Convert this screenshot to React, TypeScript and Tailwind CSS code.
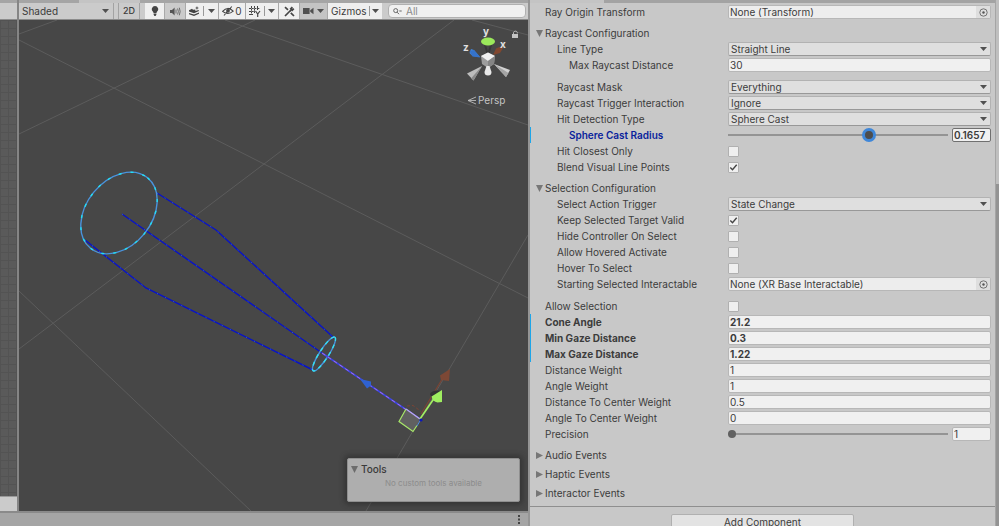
import React, { FunctionComponent, ReactNode } from 'react';

interface RowProps {
  label: string;
  indent?: 0 | 1 | 2;
  tone?: 'normal' | 'override' | 'active';
  children: ReactNode;
}

const indents = ['pl-[15px]', 'pl-[27px]', 'pl-[39px]'];
const tones = {
  normal: 'border-transparent',
  override: 'border-[#1ea5e8] font-bold',
  active: 'border-[#1ea5e8] font-semibold',
};

const toId = (label: string) => label.toLowerCase().replace(/ /g, '-');

const Row: FunctionComponent<RowProps> = ({ label, indent = 0, tone = 'normal', children }) => (
  <div className={`grid h-4 grid-cols-[197px_1fr] items-center border-l ${tones[tone]}`}>
    <label
      htmlFor={toId(label)}
      className={`-ml-px whitespace-nowrap ${indents[indent]} ${tone === 'active' ? 'text-[#0a1f9c]' : ''}`}
    >
      {label}
    </label>
    {children}
  </div>
);

const Caret: FunctionComponent<{ className?: string }> = ({ className = '' }) => (
  <svg viewBox="0 0 7 4" className={`h-1 w-[7px] shrink-0 ${className}`} fill="#505050">
    <path d="M0 0h7L3.5 4z" />
  </svg>
);

interface FieldProps {
  label: string;
  value: string;
  indent?: 0 | 1 | 2;
  tone?: 'normal' | 'override';
}

const TextRow: FunctionComponent<FieldProps> = ({ label, value, indent, tone }) => (
  <Row label={label} indent={indent} tone={tone}>
    <input
      id={toId(label)}
      defaultValue={value}
      className="h-3.5 w-full min-w-0 rounded-xs border border-[#b7b7b7] bg-[#f0f0f0] px-px outline-none"
    />
  </Row>
);

const SelectRow: FunctionComponent<FieldProps> = ({ label, value, indent }) => (
  <Row label={label} indent={indent}>
    <div className="grid items-center">
      <select
        id={toId(label)}
        className="col-start-1 row-start-1 h-3.5 w-full appearance-none rounded-xs border border-[#b2b2b2] border-b-[#989898] bg-[#dfdfdf] px-0.5 leading-3 outline-none"
      >
        <option>{value}</option>
      </select>
      <Caret className="pointer-events-none col-start-1 row-start-1 mr-1 justify-self-end" />
    </div>
  </Row>
);

const ObjectRow: FunctionComponent<FieldProps> = ({ label, value, indent }) => (
  <Row label={label} indent={indent}>
    <div className="flex h-3.5 overflow-hidden rounded-xs border border-[#b7b7b7] bg-[#ededed]">
      <input id={toId(label)} readOnly value={value} className="min-w-0 flex-1 px-px outline-none" />
      <button aria-label={`Pick ${label}`} className="flex w-3.5 items-center justify-center bg-[#dedede]">
        <svg viewBox="0 0 9 9" className="size-[9px]">
          <circle cx="4.5" cy="4.5" r="3.7" fill="none" stroke="#666" strokeWidth="0.9" />
          <circle cx="4.5" cy="4.5" r="1.2" fill="#555" />
        </svg>
      </button>
    </div>
  </Row>
);

const CheckRow: FunctionComponent<{ label: string; checked?: boolean; indent?: 0 | 1 | 2 }> = ({
  label,
  checked = false,
  indent = 1,
}) => (
  <Row label={label} indent={indent}>
    <div className="grid w-[11px] items-center">
      <input
        id={toId(label)}
        type="checkbox"
        defaultChecked={checked}
        className="peer col-start-1 row-start-1 size-[11px] appearance-none rounded-[1px] border border-[#b0b0b0] bg-[#efefef]"
      />
      <svg
        viewBox="0 0 11 11"
        className="pointer-events-none invisible col-start-1 row-start-1 size-[11px] peer-checked:visible"
        fill="none"
        stroke="#444"
        strokeWidth="1.4"
      >
        <path d="M2.3 5.6l2.2 2.2 4.2-5" />
      </svg>
    </div>
  </Row>
);

const Foldout: FunctionComponent<{ title: string; open?: boolean }> = ({ title, open = false }) => (
  <button className="flex h-4 w-full items-center gap-0.5 pl-1.5 text-left" aria-expanded={open}>
    <svg viewBox="0 0 7 7" className="size-[7px]" fill="#777">
      <path d={open ? 'M0 0h7L3.5 7z' : 'M0 0l7 3.5L0 7z'} />
    </svg>
    {title}
  </button>
);

const Inspector: FunctionComponent = () => (
  <aside className="flex w-[471px] shrink-0 border-l-2 border-[#959595] bg-[#c8c8c8]">
    <div className="flex min-w-0 flex-1 flex-col">
      <div className="h-[3px] shrink-0 bg-[#a3a3a3]">
        <div className="h-full w-[74px] bg-[#c4c4c4]" />
      </div>
      <div className="pt-px pr-1">
        <ObjectRow label="Ray Origin Transform" value="None (Transform)" />
        <div className="mt-[5px]">
          <Foldout title="Raycast Configuration" open />
          <SelectRow label="Line Type" value="Straight Line" indent={1} />
          <TextRow label="Max Raycast Distance" value="30" indent={2} />
        </div>
        <div className="mt-1.5">
          <SelectRow label="Raycast Mask" value="Everything" indent={1} />
          <SelectRow label="Raycast Trigger Interaction" value="Ignore" indent={1} />
          <SelectRow label="Hit Detection Type" value="Sphere Cast" indent={1} />
          <Row label="Sphere Cast Radius" indent={2} tone="active">
            <div className="flex items-center gap-1">
              <input
                id="sphere-cast-radius"
                type="range"
                min="0"
                max="1"
                step="0.01"
                defaultValue="0.65"
                className="h-4 min-w-0 flex-1 appearance-none bg-transparent outline-none [&::-webkit-slider-runnable-track]:h-0.5 [&::-webkit-slider-runnable-track]:bg-[#949494] [&::-webkit-slider-thumb]:-mt-1.5 [&::-webkit-slider-thumb]:size-3.5 [&::-webkit-slider-thumb]:appearance-none [&::-webkit-slider-thumb]:rounded-full [&::-webkit-slider-thumb]:border-3 [&::-webkit-slider-thumb]:border-[#3f87d9] [&::-webkit-slider-thumb]:bg-[#4d4d4d]"
              />
              <input
                aria-label="Sphere Cast Radius value"
                defaultValue="0.1657"
                className="h-3.5 w-[39px] rounded-xs border border-[#707070] bg-[#f0f0f0] px-px outline-none"
              />
            </div>
          </Row>
          <CheckRow label="Hit Closest Only" />
          <CheckRow label="Blend Visual Line Points" checked />
        </div>
        <div className="mt-[5px]">
          <Foldout title="Selection Configuration" open />
          <SelectRow label="Select Action Trigger" value="State Change" indent={1} />
          <CheckRow label="Keep Selected Target Valid" checked />
          <CheckRow label="Hide Controller On Select" />
          <CheckRow label="Allow Hovered Activate" />
          <CheckRow label="Hover To Select" />
          <ObjectRow label="Starting Selected Interactable" value="None (XR Base Interactable)" indent={1} />
        </div>
        <div className="mt-1.5">
          <CheckRow label="Allow Selection" indent={0} />
          <TextRow label="Cone Angle" value="21.2" tone="override" />
          <TextRow label="Min Gaze Distance" value="0.3" tone="override" />
          <TextRow label="Max Gaze Distance" value="1.22" tone="override" />
          <TextRow label="Distance Weight" value="1" />
          <TextRow label="Angle Weight" value="1" />
          <TextRow label="Distance To Center Weight" value="0.5" />
          <TextRow label="Angle To Center Weight" value="0" />
          <Row label="Precision">
            <div className="flex items-center gap-1">
              <input
                id="precision"
                type="range"
                min="0"
                max="1"
                step="0.01"
                defaultValue="0"
                className="h-4 min-w-0 flex-1 appearance-none bg-transparent outline-none [&::-webkit-slider-runnable-track]:h-0.5 [&::-webkit-slider-runnable-track]:bg-[#949494] [&::-webkit-slider-thumb]:-mt-[3px] [&::-webkit-slider-thumb]:size-2 [&::-webkit-slider-thumb]:appearance-none [&::-webkit-slider-thumb]:rounded-full [&::-webkit-slider-thumb]:bg-[#616161]"
              />
              <input
                aria-label="Precision value"
                defaultValue="1"
                className="h-3.5 w-[39px] rounded-xs border border-[#b7b7b7] bg-[#f0f0f0] px-px outline-none"
              />
            </div>
          </Row>
        </div>
        <div className="mt-[5px] flex flex-col gap-[3px]">
          <Foldout title="Audio Events" />
          <Foldout title="Haptic Events" />
          <Foldout title="Interactor Events" />
        </div>
      </div>
      <div className="mt-[5px] flex justify-center border-t border-[#8f8f8f] pt-[7px]">
        <button className="flex h-[18px] w-[183px] shrink-0 justify-center rounded-xs border border-[#b0b0b0] bg-[#e3e3e3] pt-0.5 leading-none">
          Add Component
        </button>
      </div>
    </div>
    <div className="flex w-1 flex-col border-l border-[#a5a5a5] bg-[#bfbfbf] pt-[184px]">
      <div className="flex-1 bg-[#939393]" />
    </div>
  </aside>
);

const Toolbar: FunctionComponent = () => (
  <div className="flex h-[17px] shrink-0 items-stretch border-b border-[#8b8b8b] bg-[#cbcbcb]">
    <button className="flex w-[95px] items-center justify-between border-r border-[#a3a3a3] pr-1 pl-[3px]">
      Shaded
      <Caret />
    </button>
    <button className="ml-1 w-[22px] border-x border-[#a3a3a3] text-[9px] font-medium">2D</button>
    <div className="ml-[5px] flex items-stretch gap-px bg-[#a9a9a9]">
      <button aria-label="Scene lighting" className="flex w-[19px] items-center justify-center bg-[#efefef]">
        <svg viewBox="0 0 8 10" className="h-2.5 w-2" fill="#444">
          <path d="M4 0a3.2 3.2 0 0 1 2 5.7L5.4 7H2.6L2 5.7A3.2 3.2 0 0 1 4 0zM2.6 7.6h2.8v1L4.6 10H3.4l-.8-1.4z" />
        </svg>
      </button>
      <button aria-label="Scene audio" className="flex w-5 items-center justify-center bg-[#cbcbcb]">
        <svg viewBox="0 0 11 9" className="h-[9px] w-[11px]" fill="#555">
          <path d="M0 3h2l2.6-2.5v8L2 6H0z" />
          <path d="M6 2.5v4M7.6 1.5q1.5 3 0 6M9.3.7q1.7 3.8 0 7.6" fill="none" stroke="#555" strokeWidth=".8" />
        </svg>
      </button>
      <button aria-label="Effects" className="flex w-8 items-center justify-between bg-[#efefef] px-[3px]">
        <svg viewBox="0 0 10 10" className="size-2.5" fill="#444">
          <path d="M0 4.2l3-1.4 1 1 2.2-.2.3 1.4L9.5 4 10 5 5 7.3 0 5.5zM0 7l5 1.6L10 6.4v1.3L5 10 0 8.2zM8 0l.5 1.4 1.5.5-1.5.6L8 4l-.6-1.5L6 1.9l1.4-.5z" />
        </svg>
        <span className="h-2.5 w-px bg-[#999]" />
        <Caret />
      </button>
      <button aria-label="Hidden objects" className="flex w-[26px] items-center justify-center gap-px bg-[#efefef]">
        <svg viewBox="0 0 12 10" className="h-2.5 w-3" fill="none" stroke="#444" strokeWidth="1.1">
          <path d="M.6 5.3Q5.8-.4 11.2 5.2 6 9.8.6 5.3zM2 9.5L9.8.5" />
          <circle cx="6" cy="4.8" r="1.3" fill="#444" />
        </svg>
        0
      </button>
      <button aria-label="Grid" className="flex w-8 items-center justify-between bg-[#efefef] px-[3px]">
        <svg viewBox="0 0 12 11" className="h-[11px] w-3" fill="none" stroke="#444">
          <path d="M2.5 0v9M5.5 0v7M8.5 0v4M0 2.5h11M0 5.5h6M0 8.5h4" strokeDasharray="2 .7" />
          <path d="M6.5 5l2.2 3L11 5M8.7 8v3" strokeWidth="1.2" />
        </svg>
        <span className="h-2.5 w-px bg-[#999]" />
        <Caret />
      </button>
      <button aria-label="Component tools" className="flex w-5 items-center justify-center bg-[#efefef]">
        <svg viewBox="0 0 11 11" className="size-[11px]" fill="none" stroke="#444" strokeWidth="1.7">
          <path d="M1 10l5-5M8.4 1.2L6.8 2.8 8.2 4.2 9.8 2.6M1 1.2l3 2.6M6.8 6.8L10 10" />
          <path d="M5.8 5.4l1.5-1.5" />
        </svg>
      </button>
      <button aria-label="Scene camera" className="flex w-[27px] items-center justify-between bg-[#c4c4c4] px-[3px]">
        <svg viewBox="0 0 11 8" className="h-2 w-[11px]" fill="#505050">
          <path d="M0 1h6.6v6H0zM7.2 3.2L10.5.8v6.4L7.2 4.8z" />
        </svg>
        <Caret />
      </button>
      <button className="flex w-[54px] items-center justify-between bg-[#efefef] px-[3px]">
        Gizmos
        <span className="h-2.5 w-px bg-[#999]" />
        <Caret />
      </button>
    </div>
    <label className="my-px mr-0.5 ml-1.5 flex min-w-0 flex-1 items-center gap-1 rounded-sm border border-[#b0b0b0] bg-[#f0f0f0] pl-1">
      <svg viewBox="0 0 9 7" className="h-[7px] w-[9px] shrink-0" fill="none" stroke="#666">
        <circle cx="2.7" cy="2.6" r="2" />
        <path d="M4.2 4.2L6 6.2M6.3 3h2.4" />
      </svg>
      <input
        aria-label="Search scene"
        placeholder="All"
        className="w-full min-w-0 outline-none placeholder:text-[#8a8a8a]"
      />
    </label>
  </div>
);

const Viewport: FunctionComponent = () => (
  <svg viewBox="19 20 509 491" preserveAspectRatio="xMinYMin slice" className="block size-full" fill="none">
    <g stroke="#5c5c5c" strokeWidth="1">
      <path d="M19 34L57 20M19 134L255 20M19 40L264 164 528 298M19 349L264 164 454 20" />
      <path d="M225 20L528 125M472 20L528 35M528 235L366 511M19 291L134 400 251 511" />
    </g>

    {/* cone gizmo */}
    <g stroke="#0813c8" strokeWidth="1.4">
      <path d="M157 193L216 230 334 338M85 240L146 288 313 370M122 214L322 353" />
      <path
        d="M157 193L216 230 334 338M85 240L146 288 313 370M122 214L322 353"
        stroke="#3f6fd0"
        strokeWidth=".8"
        strokeDasharray="1 8"
      />
    </g>
    <g strokeWidth="1.4" stroke="#4a93dc">
      <ellipse cx="119" cy="213" rx="45.3" ry="32.7" transform="rotate(-51 119 213)" />
      <ellipse
        cx="119"
        cy="213"
        rx="45.3"
        ry="32.7"
        transform="rotate(-51 119 213)"
        stroke="#22e0f5"
        strokeDasharray="3 9"
      />
      <ellipse cx="324" cy="354" rx="20" ry="4.6" transform="rotate(-57 324 354)" />
      <ellipse
        cx="324"
        cy="354"
        rx="20"
        ry="4.6"
        transform="rotate(-57 324 354)"
        stroke="#35e2f0"
        strokeDasharray="4 4"
      />
    </g>
    <path d="M322 353L420 419" stroke="#3b46e0" strokeWidth="1.6" />
    <path d="M322 353L420 419" stroke="#a66bf0" strokeWidth="1" strokeDasharray="4 3" />
    <path d="M360 379l11 2.5v4l-4 3z" fill="#2f62d2" />

    {/* move handle */}
    <path d="M406 409l14.5 10-7.5 12.5-14-10z" fill="#606060" />
    <path d="M406 409l-7 12.5 14 10 4-6" stroke="#a8e86a" strokeWidth="1.2" />
    <path d="M406 409l14 10" stroke="#b9a6f5" strokeWidth="1.4" />
    <path d="M417 426l3.5-6" stroke="#4f8fe0" />
    <path d="M407 406l6-.5 8 6" stroke="#7b4434" strokeDasharray="3 2" />
    <path d="M421 414l23-38" stroke="#7b4434" strokeWidth="1.2" />
    <path d="M450 369l-10 6.5 1 4.5 8 1z" fill="#7d4835" />
    <path d="M430 394q3-5 11-3l-9 7z" fill="#333" />
    <path d="M420 419l15-22" stroke="#a2ee62" strokeWidth="1.7" />
    <path d="M442 390l-10.5 6.5q1 5 6 6l4.5-.5z" fill="#9fee60" />
    <circle cx="421" cy="420" r="1.6" fill="#0a16c0" />

    {/* orientation gizmo */}
    <path d="M485 45l3 10M491 45l-3 10" stroke="#383838" strokeWidth="2" />
    <path d="M480 57l-6-7-3-1-1.5 4 3 3z" fill="#4387dc" />
    <path d="M474 50l-4.5 1 3 5.5 8 1z" fill="#3573cb" />
    <path d="M493 55l3-6.5q6-3 7-.5l-3 5z" fill="#81472f" />
    <ellipse cx="488" cy="41.5" rx="7" ry="4" fill="#9be95b" />
    <path d="M482 66l-15 7.5 6.5 7z" fill="#bdbdbd" />
    <path d="M482 66l-11 12.5 2.5 2z" fill="#8a8a8a" />
    <path d="M494 64l16 6-4 7z" fill="#d2d2d2" />
    <path d="M494 64l14.5 9-2.5 4z" fill="#a5a5a5" />
    <path d="M481 56l7-3.5 7 3.5-1 8-6 4-6-4z" fill="#9d9d9d" />
    <path d="M481 56l7-3.5 7 3.5-7 5z" fill="#f0f0f0" />
    <path d="M488 61l7-5-1 8-6 4z" fill="#858585" />
    <path d="M486.5 66h3l2 6a3.5 3.5 0 0 1-7 0z" fill="#e8e8e8" />
    <g fill="#e0e0e0" fontFamily="Inter, sans-serif" fontSize="10" fontWeight="700">
      <text x="483" y="35">y</text>
      <text x="463" y="51">z</text>
      <text x="500" y="48">x</text>
    </g>
    <text x="478" y="104" fill="#c4c4c4" fontFamily="Inter, sans-serif" fontSize="10">
      Persp
    </text>
    <path d="M476 97l-8 3.5 8 3.5M468 100.5h8" stroke="#bbb" strokeWidth=".9" />
    <path d="M512 34h6v4h-6z" fill="#c4c4c4" />
    <path d="M513.5 34.5v-2a2 2 0 0 1 3.8 0v1" stroke="#c4c4c4" strokeWidth=".9" />
  </svg>
);

const ToolsOverlay: FunctionComponent = () => (
  <section className="absolute right-2 bottom-[9px] h-11 w-[173px] rounded-xs border border-[#8f8f8f] bg-[#aeaeae] px-[3px] pt-0.5 shadow-[0_0_5px_3px_rgba(35,35,35,0.45)]">
    <h2 className="flex h-4 items-center gap-[3px] font-medium text-[#3a3a3a]">
      <svg viewBox="0 0 7 7" className="size-[7px]" fill="#6c6c6c">
        <path d="M0 0h7L3.5 7z" />
      </svg>
      Tools
    </h2>
    <p className="text-center text-[8px] leading-3 text-[#8c8c8c]">No custom tools available</p>
  </section>
);

const App: FunctionComponent = () => (
  <div className="flex h-screen overflow-hidden bg-[#a5a5a5] font-['Inter',sans-serif] text-[10px] leading-4 text-[#3c3c3c]">
    <main className="flex min-w-0 flex-1 flex-col">
      <div className="flex min-h-0 flex-1">
        <div className="flex w-[17px] shrink-0 flex-col pt-[3px]">
          <div className="h-[17px] border-b border-[#8b8b8b] bg-[#cbcbcb]" />
          <div className="flex-1 bg-[#5a5a5a] bg-[linear-gradient(#535353_1px,transparent_1px),linear-gradient(90deg,#535353_1px,transparent_1px)] bg-size-[8px_8px]" />
          <div className="h-[15px] border-t border-[#999] bg-[#cbcbcb]" />
        </div>
        <div className="flex min-w-0 flex-1 flex-col border-l-2 border-[#858585]">
          <div className="h-[3px] shrink-0 bg-[#a5a5a5]">
            <div className="ml-[60px] h-full w-[61px] bg-[#c4c4c4]" />
          </div>
          <Toolbar />
          <div className="relative min-h-0 flex-1 bg-[#474747]">
            <Viewport />
            <ToolsOverlay />
          </div>
        </div>
      </div>
      <div className="flex h-[15px] shrink-0 items-center justify-end border-t-2 border-[#8a8a8a] bg-[#a5a5a5] pr-2">
        <button aria-label="More options">
          <svg viewBox="0 0 2 9" className="h-[9px] w-0.5" fill="#444">
            <path d="M0 0h2v2H0zM0 3.5h2v2H0zM0 7h2v2H0z" />
          </svg>
        </button>
      </div>
    </main>
    <Inspector />
  </div>
);

export default App;
